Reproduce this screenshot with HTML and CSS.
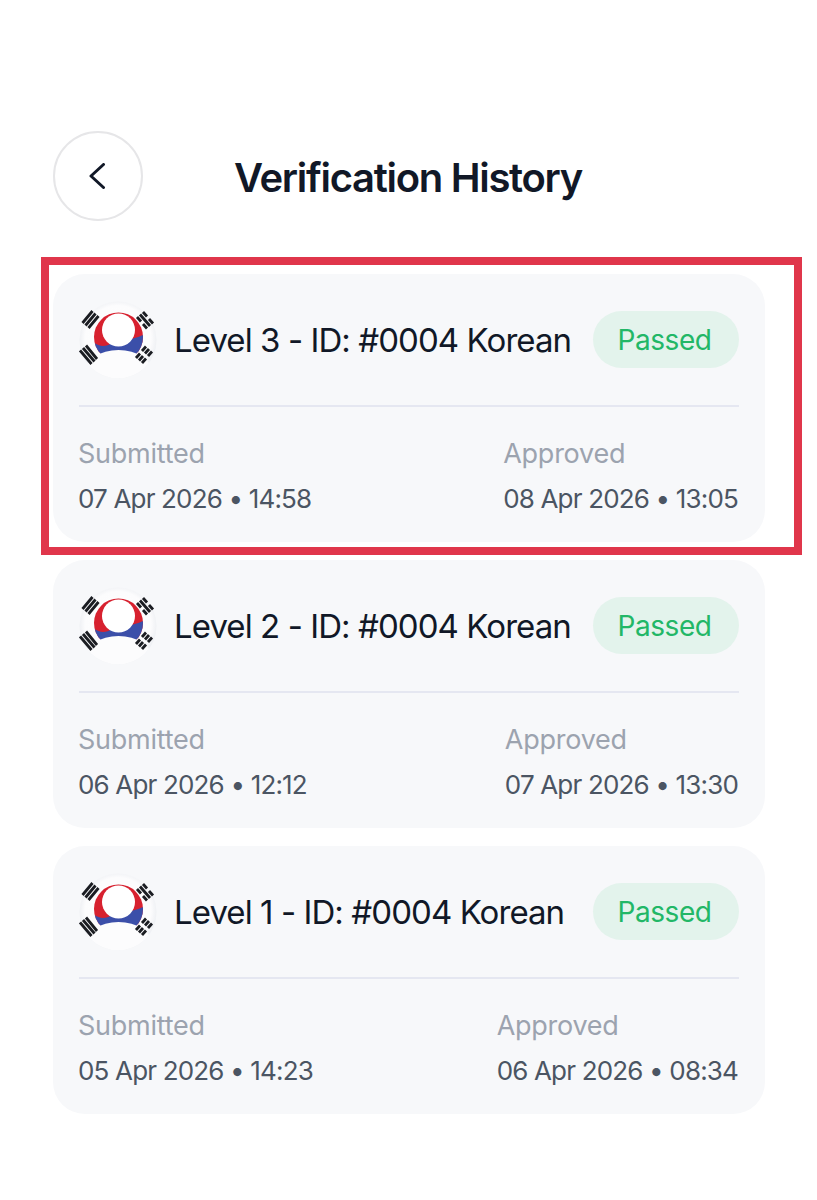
FILE: index.html
```html
<!DOCTYPE html>
<html lang="en">
<head>
<meta charset="utf-8">
<title>Verification History</title>
<link rel="stylesheet" href="styles.css">
</head>
<body>
<svg class="defs" width="0" height="0" aria-hidden="true">
  <defs>
    <radialGradient id="flagBg" cx="50%" cy="48%" r="52%">
      <stop offset="0%" stop-color="#ffffff"/>
      <stop offset="82%" stop-color="#fcfcfd"/>
      <stop offset="100%" stop-color="#eceef2"/>
    </radialGradient>
    <clipPath id="yin"><circle cx="39.500" cy="36" r="24.500"/></clipPath>
    <clipPath id="disc"><circle cx="39" cy="39" r="38.500"/></clipPath>
    <symbol id="flag" viewBox="0 0 78 78">
      <circle cx="39" cy="39" r="38.500" fill="url(#flagBg)"/>
      <g clip-path="url(#yin)">
        <rect x="14" y="10" width="52" height="52" fill="#d7212f"/>
        <path d="M14 41C20 46 27 46 33 42C42 37 52 41 66 33V62H14Z" fill="#3b4fa9"/>
      </g>
      <circle cx="39.500" cy="29" r="16.500" fill="#fff"/>
      <ellipse cx="39.500" cy="72" rx="34" ry="23" fill="#fcfcfd" clip-path="url(#disc)"/>
      <g stroke="#1b1d22" stroke-width="2.800" fill="none">
        <path d="M3.500 22 13.500 10M6.500 24.500 16.500 12.500M9.500 27 19.500 15"/>
        <path d="M1 49.500 12.500 63M4 47 15.500 60.500M7 44.500 18 58"/>
        <path d="M64 11 68 15.500M70 18 74 22.500M61 13.500 71 25M58 16 62 20.500M64 23 68 27.500"/>
        <path d="M63 62 67 57.500M69 55 73 50.500M60 59.500 64 55M66 52.500 70 48M57 57 61 52.500M63 50 67 45.500"/>
      </g>
    </symbol>
  </defs>
</svg>
<main class="page">
  <header class="top">
    <button class="back" type="button" aria-label="Back">
      <svg width="18" height="26" viewBox="0 0 18 26"><path d="M15.500 1.500 3 13 15.500 24.500" fill="none" stroke="#111827" stroke-width="3" stroke-linecap="round" stroke-linejoin="round"/></svg>
    </button>
    <h1 class="title">Verification History</h1>
    <span></span>
  </header>
  <section class="list">
    <article class="card card-marked">
      <div class="row-head">
        <svg class="flag"><use href="#flag"/></svg>
        <h2 class="name">Level 3 - ID: #0004 Korean</h2>
        <span class="pill">Passed</span>
      </div>
      <div class="row-dates">
        <div><p class="label">Submitted</p><p class="date">07 Apr 2026 • 14:58</p></div>
        <div><p class="label">Approved</p><p class="date">08 Apr 2026 • 13:05</p></div>
      </div>
    </article>
    <article class="card">
      <div class="row-head">
        <svg class="flag"><use href="#flag"/></svg>
        <h2 class="name">Level 2 - ID: #0004 Korean</h2>
        <span class="pill">Passed</span>
      </div>
      <div class="row-dates">
        <div><p class="label">Submitted</p><p class="date">06 Apr 2026 • 12:12</p></div>
        <div><p class="label">Approved</p><p class="date">07 Apr 2026 • 13:30</p></div>
      </div>
    </article>
    <article class="card">
      <div class="row-head">
        <svg class="flag"><use href="#flag"/></svg>
        <h2 class="name">Level 1 - ID: #0004 Korean</h2>
        <span class="pill">Passed</span>
      </div>
      <div class="row-dates">
        <div><p class="label">Submitted</p><p class="date">05 Apr 2026 • 14:23</p></div>
        <div><p class="label">Approved</p><p class="date">06 Apr 2026 • 08:34</p></div>
      </div>
    </article>
  </section>
</main>
</body>
</html>
```
FILE: styles.css
```css
* { box-sizing: border-box; }
html, body { margin: 0; padding: 0; background: #fff; }
body { font-family: Inter, "Noto Sans", sans-serif; color: #111827; }
.defs { position: absolute; }
.page { padding: 131px 52px 0 53px; }
.top { display: grid; grid-template-columns: 90px 1fr 90px; align-items: center; height: 90px; }
.back { width: 90px; height: 90px; padding: 0 2px 0 0; border: 2px solid #e6e6e8; border-radius: 50%; background: #fff; display: flex; align-items: center; justify-content: center; }
.title { margin: 0; padding: 4px 2px 0 0; text-align: center; font-size: 40px; line-height: 48px; font-weight: 600; letter-spacing: -1.3px; color: #111827; }
.list { display: flex; flex-direction: column; gap: 18px; margin-top: 53px; }
.card { position: relative; height: 268px; padding: 27px 26px 0; border-radius: 32px; background: #f7f8fa; }
.card-marked::after { content: ""; position: absolute; top: -17px; left: -12px; right: -37px; bottom: -13px; border: 8px solid #e0364b; pointer-events: none; }
.row-head { display: flex; align-items: center; height: 106px; padding-bottom: 27px; border-bottom: 2px solid #e5e7f1; }
.flag { flex: none; width: 78px; height: 78px; margin-right: 17px; filter: blur(0.4px); }
.name { flex: 1; margin: 0; padding-top: 1px; font-size: 33px; line-height: 40px; font-weight: 400; letter-spacing: -0.93px; color: #111827; white-space: nowrap; }
.pill { flex: none; width: 146px; height: 57px; padding-right: 3px; border-radius: 29px; background: #e3f3ec; color: #22b767; font-size: 28px; line-height: 59px; text-align: center; letter-spacing: -0.45px; }
.row-dates { display: flex; justify-content: space-between; padding-top: 29px; padding-right: 1px; }
.label { margin: 0 0 0 -1px; font-size: 27px; line-height: 36px; color: #9ca3af; letter-spacing: -0.25px; }
.date { margin: 9px 0 0 -1px; font-size: 26px; line-height: 36px; color: #4b5563; letter-spacing: -0.83px; white-space: nowrap; }
```
